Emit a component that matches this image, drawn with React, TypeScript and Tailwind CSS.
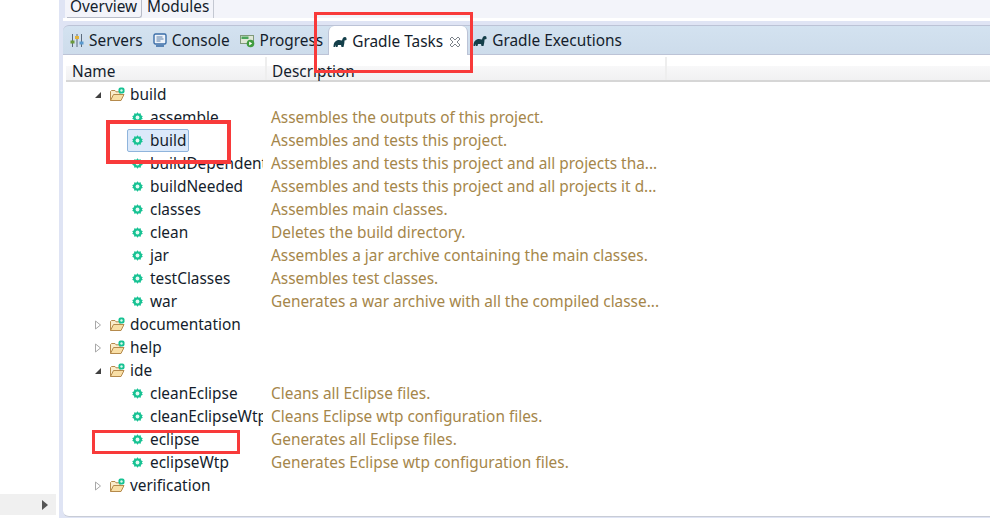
import React from "react";

function Gear() {
  return (
    <svg width="11" height="11" viewBox="0 0 12 12" className="shrink-0">
      <path d="M6 .2l1.300 1.800 2.200-.6.300 2.200 2 1-1.100 1.400 1.100 1.400-2 1-.3 2.200-2.200-.6L6 11.800 4.700 10l-2.200.6-.3-2.200-2-1L1.300 6 .2 4.600l2-1 .3-2.200 2.200.6z" fill="#17c293" />
      <circle cx="6" cy="6" r="2.100" fill="#e4fbf4" />
    </svg>
  );
}

function Folder() {
  return (
    <svg width="17" height="16" viewBox="0 0 17 16" className="shrink-0">
      <path d="M1.500 13.500V4.500l1-1h3.500l1 1.300h4v2" fill="#fbeccb" stroke="#b58a4c" strokeWidth="1" />
      <path d="M1.500 13.500l3-6h10.500l-3 6z" fill="#f9dfa6" stroke="#b58a4c" strokeWidth="1" />
      <rect x="9.500" y="0.500" width="6" height="6" rx="2" fill="#17c293" />
      <circle cx="12.500" cy="3.500" r="1.200" fill="#d9fbef" />
    </svg>
  );
}

function Arrow({ open }: { open: boolean }) {
  return open ? (
    <svg width="8" height="8" viewBox="0 0 8 8" className="shrink-0">
      <path d="M7 1v6H1z" fill="#404040" />
    </svg>
  ) : (
    <svg width="8" height="10" viewBox="0 0 8 10" className="shrink-0">
      <path d="M1.500 1l5 4-5 4z" fill="#fff" stroke="#a8a8a8" />
    </svg>
  );
}

function Elephant() {
  return (
    <svg width="14" height="12" viewBox="0 0 14 12" className="shrink-0">
      <path d="M.5 11C.5 6 3 4 6 4l3 .5C9.500 2 10.500 1 12 1c1.200 0 1.800 1 1.500 3l-2 .5c0 2.500-.5 4.500-1 6.500h-2L8 9H5l-.5 2H2.800l-.3-2L2 11z" fill="#143f4a" />
    </svg>
  );
}

function ServersIcon() {
  return (
    <svg width="14" height="15" viewBox="0 0 14 15" className="shrink-0">
      <path d="M2.500 1v13M7 1v13M11.500 1v13" stroke="#5b6b7d" strokeWidth="1" />
      <rect x=".5" y="7.500" width="4" height="3" fill="#6b9a3a" />
      <rect x="5" y="3" width="4" height="3" fill="#e3b23a" />
      <rect x="9.500" y="8.500" width="4" height="3" fill="#5a9ad0" />
    </svg>
  );
}

function ConsoleIcon() {
  return (
    <svg width="14" height="15" viewBox="0 0 14 15" className="shrink-0">
      <rect x="1" y="1" width="12" height="10" rx="1.500" fill="#eef3fa" stroke="#3b6ea8" strokeWidth="1.400" />
      <path d="M3.500 4h6M3.500 6h7M3.500 8h4" stroke="#5a7fa8" />
      <path d="M3 13h8" stroke="#3b6ea8" strokeWidth="1.600" />
    </svg>
  );
}

function ProgressIcon() {
  return (
    <svg width="15" height="15" viewBox="0 0 15 15" className="shrink-0">
      <rect x=".5" y="2.500" width="13" height="8" fill="#dfe8d8" stroke="#7f9a7a" />
      <rect x="1.500" y="3.500" width="7" height="2.500" fill="#4aa55a" />
      <circle cx="10.500" cy="10.500" r="3.800" fill="#3f9c3f" />
      <path d="M9.200 8.500l3 2-3 2z" fill="#fff" />
    </svg>
  );
}

function CloseX() {
  return (
    <svg width="12" height="12" viewBox="0 0 12 12" className="shrink-0">
      <path d="M1 3L3 1 6 4 9 1 11 3 8 6 11 9 9 11 6 8 3 11 1 9 4 6z" fill="#fff" stroke="#7d838a" strokeWidth="1" />
    </svg>
  );
}

function Group({ label, open }: { label: string; open: boolean }) {
  return (
    <div className="flex h-[23px] items-center pl-[28px]">
      <div className="flex w-[15px] justify-start">
        <Arrow open={open} />
      </div>
      <Folder />
      <span className="ml-[4px]">{label}</span>
    </div>
  );
}

function Task({ name, desc, selected }: { name: string; desc: string; selected?: boolean }) {
  return (
    <div className="flex h-[23px] items-center">
      <div className="w-[197px] shrink-0 overflow-hidden pl-[66px]">
        <div
          className={
            selected
              ? "ml-[-5px] flex h-[23px] w-[62px] items-center rounded-[2px] border border-[#8fb4dc] bg-[#dbe9fa] pl-[4px]"
              : "flex h-[23px] items-center"
          }
        >
          <Gear />
          <span className="ml-[7px] whitespace-nowrap">{name}</span>
        </div>
      </div>
      <span className="ml-[8px] whitespace-nowrap text-[#a5864a]">{desc}</span>
    </div>
  );
}

function Tab({ icon, label }: { icon: React.ReactNode; label: string }) {
  return (
    <div className="flex items-center gap-[5px]">
      {icon}
      <span>{label}</span>
    </div>
  );
}

export default function App() {
  return (
    <div
      className="relative flex h-[518px] w-[990px] overflow-hidden bg-white text-[15.4px] text-[#141d2c]"
      style={{ fontFamily: '"Noto Sans", "Open Sans", sans-serif' }}
    >
      <aside className="flex w-[59px] shrink-0 flex-col justify-end bg-white pr-[3px] pb-[3px]">
        <div className="flex h-[21px] items-center justify-end bg-[#f0f0f0] pr-[8px]">
          <svg width="6" height="10" viewBox="0 0 6 10">
            <path d="M0 0l6 5-6 5z" fill="#555" />
          </svg>
        </div>
      </aside>

      <main className="flex min-w-0 flex-1 flex-col bg-[#dfe4f4] pl-[4px]">
        <div className="ml-[2px] flex h-[18px] items-start bg-[#f3f4fa] pl-[2px]">
          <div className="flex h-[18px] w-[75px] items-center rounded-br-[3px] border-r border-b border-[#b8bcc8] pb-[3px] pl-[3px] leading-none">
            Overview
          </div>
          <div className="flex h-[18px] w-[72px] items-center border-r border-[#c4c8d2] pb-[4px] pl-[5px] leading-none">
            Modules
          </div>
        </div>
        <div className="h-[3px] bg-white" />
        <div className="h-[4px]" />

        <div className="flex h-[30px] items-stretch rounded-tl-[6px] border-y border-[#bcc3d6] bg-gradient-to-b from-[#d3e2f0] to-[#cddceb] pl-[7px]">
          <div className="flex items-center gap-[10px] pt-[2px]">
            <Tab icon={<ServersIcon />} label="Servers" />
            <Tab icon={<ConsoleIcon />} label="Console" />
            <Tab icon={<ProgressIcon />} label="Progress" />
          </div>
          <div className="mb-[-1px] ml-[5px] flex w-[140px] items-center gap-[5px] rounded-t-[6px] border-x border-[#bcc3d6] bg-white pt-[2px] pl-[4px]">
            <Elephant />
            <span>Gradle Tasks</span>
            <span className="ml-[1px]">
              <CloseX />
            </span>
          </div>
          <div className="ml-[5px] flex items-center pt-[2px]">
            <Tab icon={<Elephant />} label="Gradle Executions" />
          </div>
        </div>

        <div className="flex flex-1 flex-col rounded-bl-[6px] border-b border-[#c8ccd6] bg-white pl-[3px]">
          <div className="mt-[11px] flex h-[16px] border-b-2 border-[#d6d6d6] bg-gradient-to-b from-[#f8f8f9] to-[#f1f1f2]">
            <div className="mt-[-9px] flex h-[23px] w-[201px] items-end border-r-2 border-[#eeeeee] pl-[6px] leading-[17px]">Name</div>
            <div className="mt-[-9px] flex h-[23px] w-[400px] items-end border-r-2 border-[#eeeeee] pl-[5px] leading-[17px]">Description</div>
          </div>
          <div className="pt-[1px]">
            <Group label="build" open />
            <Task name="assemble" desc="Assembles the outputs of this project." />
            <Task name="build" desc="Assembles and tests this project." selected />
            <Task name="buildDependents" desc="Assembles and tests this project and all projects tha..." />
            <Task name="buildNeeded" desc="Assembles and tests this project and all projects it d..." />
            <Task name="classes" desc="Assembles main classes." />
            <Task name="clean" desc="Deletes the build directory." />
            <Task name="jar" desc="Assembles a jar archive containing the main classes." />
            <Task name="testClasses" desc="Assembles test classes." />
            <Task name="war" desc="Generates a war archive with all the compiled classe..." />
            <Group label="documentation" open={false} />
            <Group label="help" open={false} />
            <Group label="ide" open />
            <Task name="cleanEclipse" desc="Cleans all Eclipse files." />
            <Task name="cleanEclipseWtp" desc="Cleans Eclipse wtp configuration files." />
            <Task name="eclipse" desc="Generates all Eclipse files." />
            <Task name="eclipseWtp" desc="Generates Eclipse wtp configuration files." />
            <Group label="verification" open={false} />
          </div>
        </div>
        <div className="h-[1px]" />
      </main>

      <div className="absolute top-[12px] left-[314px] h-[61px] w-[159px] border-[3px] border-[#f83a3a]" />
      <div className="absolute top-[120px] left-[106px] h-[44px] w-[125px] border-[4px] border-[#f83a3a]" />
      <div className="absolute top-[430px] left-[92px] h-[24px] w-[148px] border-[3px] border-[#f83a3a]" />
    </div>
  );
}
